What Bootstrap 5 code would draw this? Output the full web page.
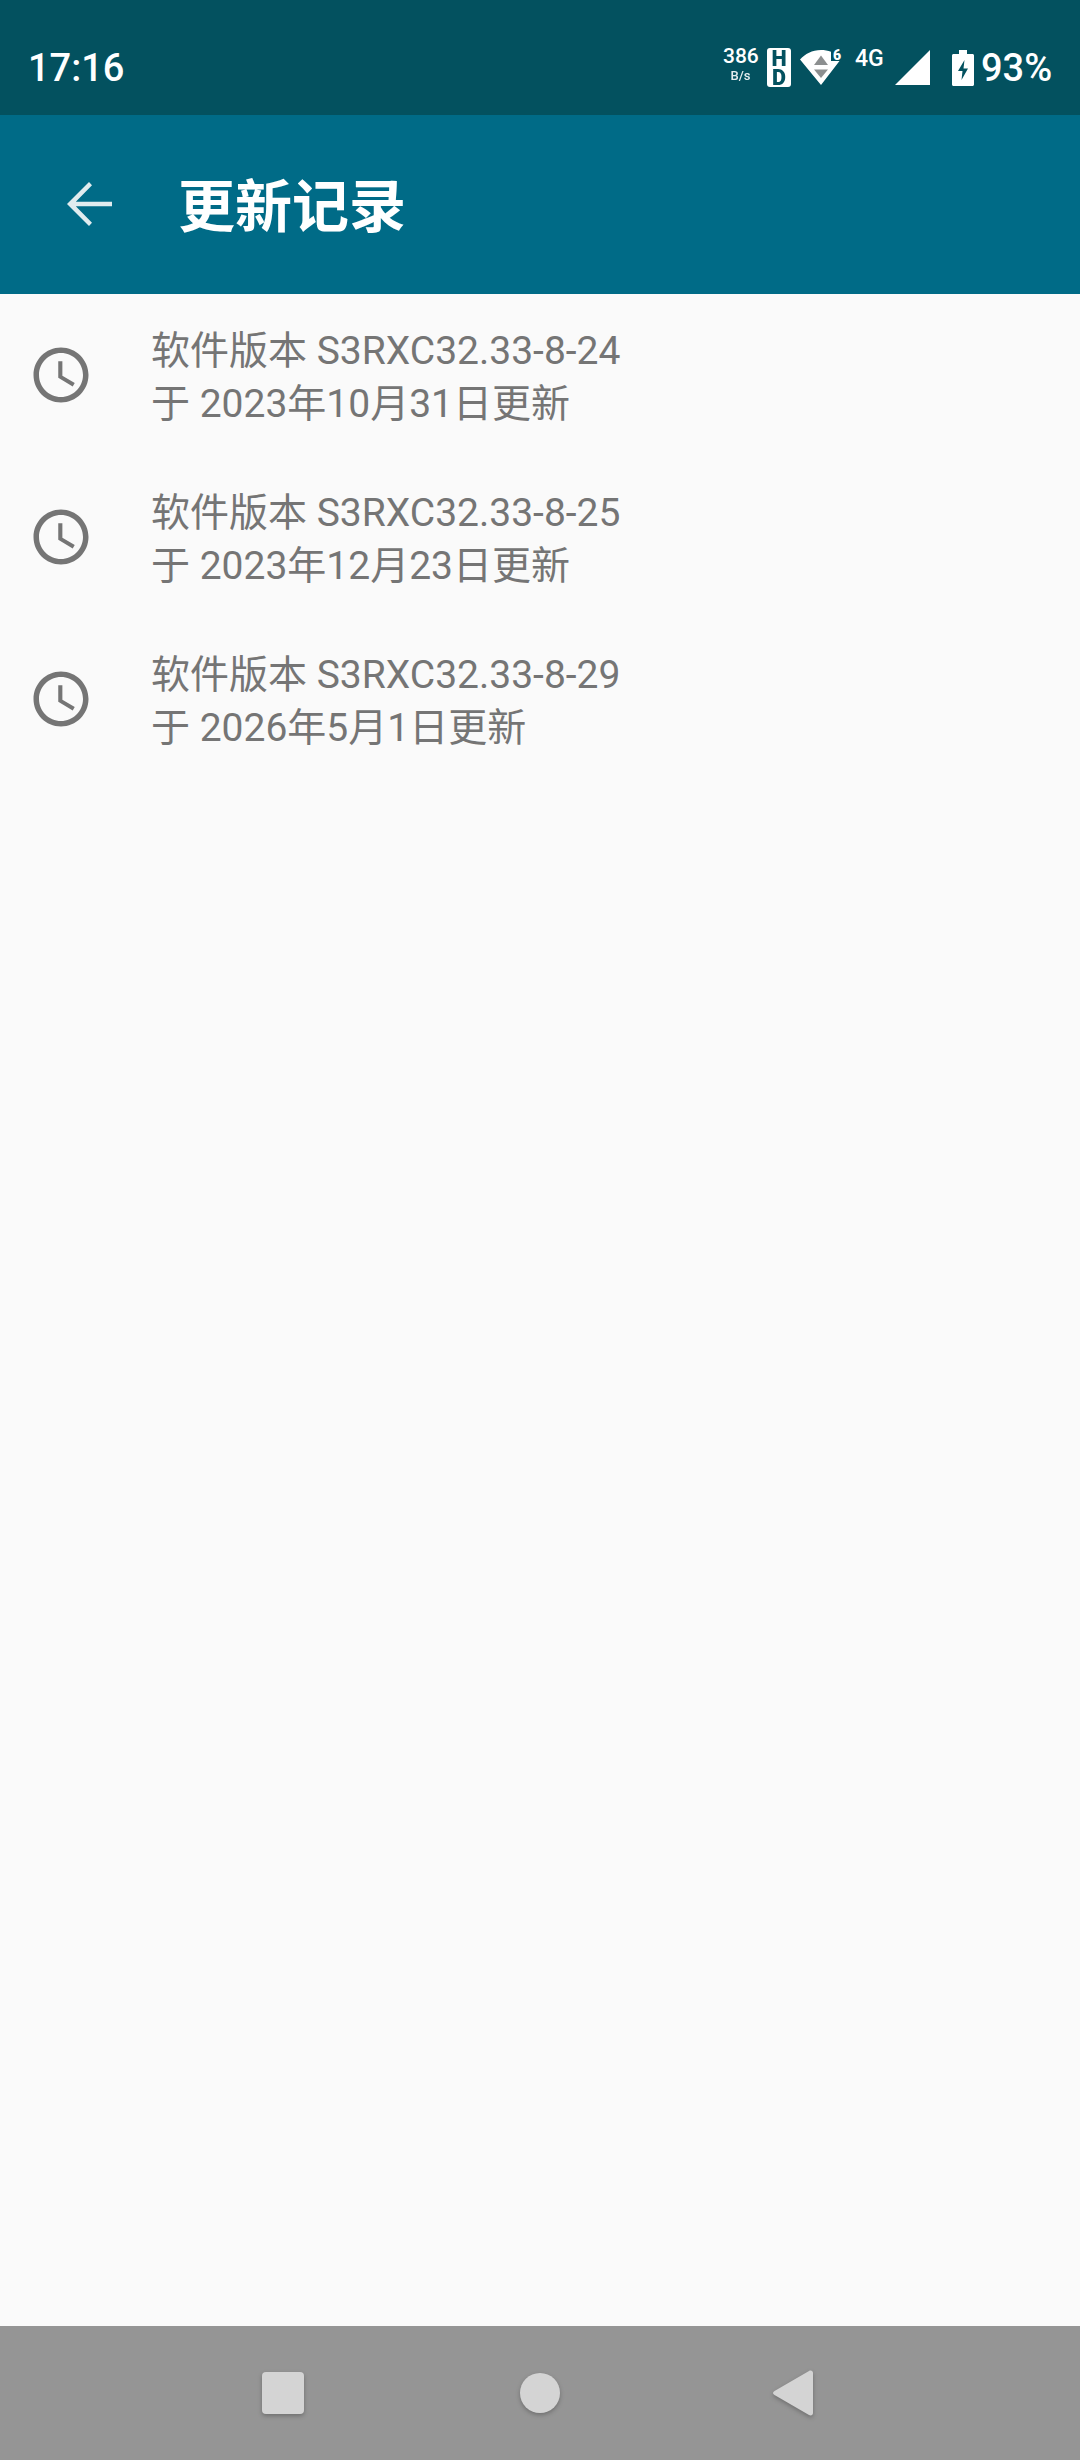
<!DOCTYPE html>
<html lang="zh-CN">
<head>
<meta charset="utf-8">
<title>更新记录</title>
<link href="https://cdn.jsdelivr.net/npm/bootstrap@5.3.0/dist/css/bootstrap.min.css" rel="stylesheet">
<style>
  html, body { height: 100%; }
  body { margin: 0; background: #fafafa; font-family: Roboto, "Noto Sans CJK SC", sans-serif; }
  .screen { height: 2460px; }

  /* status bar */
  .status-strip { height: 115px; background: #03515f; color: #fff; padding: 20px 29px 0 28px; }
  .clock-time { font-size: 38px; font-weight: 500; line-height: 1; }
  .net-speed { width: 35px; margin-right: 9px; margin-top: -4px; text-align: center; font-weight: 500; }
  .net-speed div:first-child { font-size: 21px; line-height: 21px; }
  .net-speed div:last-child { font-size: 13px; line-height: 18px; opacity: .9; }
  .hd-chip { width: 24px; height: 39px; background: #fff; border-radius: 3px; color: #03515f; font-weight: 900; text-align: center; margin-right: 9px; padding-top: 1px; }
  .hd-letter { display: block; height: 19px; font-size: 16px; line-height: 19px; transform: scale(1.35); transform-origin: center; }
  .wifi-glyph { margin-right: 13px; }
  .wifi-wrap { position: relative; }
  .wifi-six { position: absolute; left: 33px; top: -2px; font-size: 14px; font-weight: 900; line-height: 14px; }
  .net-type { font-size: 23px; font-weight: 500; line-height: 1; margin-right: 8px; margin-top: -19px; width: 32px; }
  .signal-glyph { margin-right: 22px; }
  .battery-glyph { margin-right: 7px; }
  .battery-level { font-size: 38px; font-weight: 500; line-height: 1; width: 70px; white-space: nowrap; }

  /* toolbar */
  .app-toolbar { height: 179px; background: #006b87; color: #fff; padding-left: 67px; }
  .back-arrow { margin-right: 66px; margin-top: -1px; }
  .page-title { font-size: 57px; font-weight: 700; line-height: 1; margin: 6px 0 0; }

  /* update list */
  .update-row { height: 162px; padding: 0 0 0 28px; background: transparent; border: 0; color: #757575; }
  .update-icon { width: 66px; height: 66px; margin-right: 57px; flex: none; }
  .update-text { font-size: 39px; line-height: 53px; white-space: nowrap; margin-top: 5px; }

  /* navigation bar */
  .nav-strip { height: 134px; background: #959595; padding-left: 262px; }
  .nav-shape { filter: drop-shadow(0 2px 2px rgba(0,0,0,.25)); display: block; }
  .nav-recent { margin-right: 216px; }
  .nav-home { margin-right: 213px; }
</style>
</head>
<body>
<div class="screen d-flex flex-column">

  <div class="status-strip d-flex align-items-center justify-content-between">
    <div class="clock-time">17:16</div>
    <div class="d-flex align-items-center">
      <div class="net-speed"><div>386</div><div>B/s</div></div>
      <div class="hd-chip"><span class="hd-letter">H</span><span class="hd-letter">D</span></div>
      <div class="wifi-wrap wifi-glyph">
        <svg width="42" height="36" viewBox="0 0 42 36" class="d-block">
          <path d="M0 9.500C5 4 12 0 21 0c3.500 0 7 .6 10 1.800V11h8.500L21 35z" fill="#fff"/>
          <path d="M14 15l7-9.500 7 9.500z" fill="#8c8f90"/>
          <path d="M14 19.500h14l-7 8.500z" fill="#8c8f90"/>
        </svg>
        <span class="wifi-six">6</span>
      </div>
      <div class="net-type">4G</div>
      <svg class="signal-glyph d-block" width="35" height="35" viewBox="0 0 35 35"><path d="M0 35L35 0v35z" fill="#fff"/></svg>
      <svg class="battery-glyph d-block" width="22" height="36" viewBox="0 0 22 36">
        <path d="M7 0h8v4h5.500c.8 0 1.500.7 1.500 1.500V34.500c0 .8-.7 1.500-1.500 1.500H1.500C.7 36 0 35.300 0 34.500V5.500C0 4.700.7 4 1.500 4H7z" fill="#fff"/>
        <path d="M12.500 10L6 21h4.500l-1 9L16 18.500h-4.500z" fill="#03515f"/>
      </svg>
      <div class="battery-level">93%</div>
    </div>
  </div>

  <header class="app-toolbar d-flex align-items-center">
    <svg class="back-arrow d-block" width="45" height="44" viewBox="0 0 45 44">
      <path d="M45 19.700H8.800L25 3.300 22 0 0 22l22 22 3-3.300L8.800 24.300H45z" fill="#e0ecef"/>
    </svg>
    <h1 class="page-title">更新记录</h1>
  </header>

  <main class="flex-grow-1">
    <ul class="list-group list-group-flush">
      <li class="list-group-item update-row d-flex align-items-center">
        <svg class="update-icon" viewBox="0 0 24 24"><path fill="#757575" d="M11.990 2C6.470 2 2 6.480 2 12s4.470 10 9.990 10C17.520 22 22 17.520 22 12S17.520 2 11.990 2zM12 20c-4.420 0-8-3.580-8-8s3.580-8 8-8 8 3.580 8 8-3.580 8-8 8z"/><path fill="#757575" d="M12.500 7H11v6l5.250 3.150.75-1.230-4.500-2.670z"/></svg>
        <div class="update-text">软件版本 S3RXC32.33-8-24<br>于 2023年10月31日更新</div>
      </li>
      <li class="list-group-item update-row d-flex align-items-center">
        <svg class="update-icon" viewBox="0 0 24 24"><path fill="#757575" d="M11.990 2C6.470 2 2 6.480 2 12s4.470 10 9.990 10C17.520 22 22 17.520 22 12S17.520 2 11.990 2zM12 20c-4.420 0-8-3.580-8-8s3.580-8 8-8 8 3.580 8 8-3.580 8-8 8z"/><path fill="#757575" d="M12.500 7H11v6l5.250 3.150.75-1.230-4.500-2.670z"/></svg>
        <div class="update-text">软件版本 S3RXC32.33-8-25<br>于 2023年12月23日更新</div>
      </li>
      <li class="list-group-item update-row d-flex align-items-center">
        <svg class="update-icon" viewBox="0 0 24 24"><path fill="#757575" d="M11.990 2C6.470 2 2 6.480 2 12s4.470 10 9.990 10C17.520 22 22 17.520 22 12S17.520 2 11.990 2zM12 20c-4.420 0-8-3.580-8-8s3.580-8 8-8 8 3.580 8 8-3.580 8-8 8z"/><path fill="#757575" d="M12.500 7H11v6l5.250 3.150.75-1.230-4.500-2.670z"/></svg>
        <div class="update-text">软件版本 S3RXC32.33-8-29<br>于 2026年5月1日更新</div>
      </li>
    </ul>
  </main>

  <footer class="nav-strip d-flex align-items-center">
    <svg class="nav-shape nav-recent" width="42" height="42" viewBox="0 0 42 42"><rect width="42" height="42" rx="4" fill="#d4d4d4"/></svg>
    <svg class="nav-shape nav-home" width="40" height="40" viewBox="0 0 40 40"><circle cx="20" cy="20" r="20" fill="#d4d4d4"/></svg>
    <svg class="nav-shape" width="40" height="46" viewBox="0 0 40 46"><path d="M36 1c2-1.200 4 0 4 2v40c0 2-2 3.200-4 2L1.500 25c-2-1.200-2-2.800 0-4z" fill="#d4d4d4"/></svg>
  </footer>
</div>
<script src="https://cdn.jsdelivr.net/npm/bootstrap@5.3.0/dist/js/bootstrap.bundle.min.js"></script>
</body>
</html>
